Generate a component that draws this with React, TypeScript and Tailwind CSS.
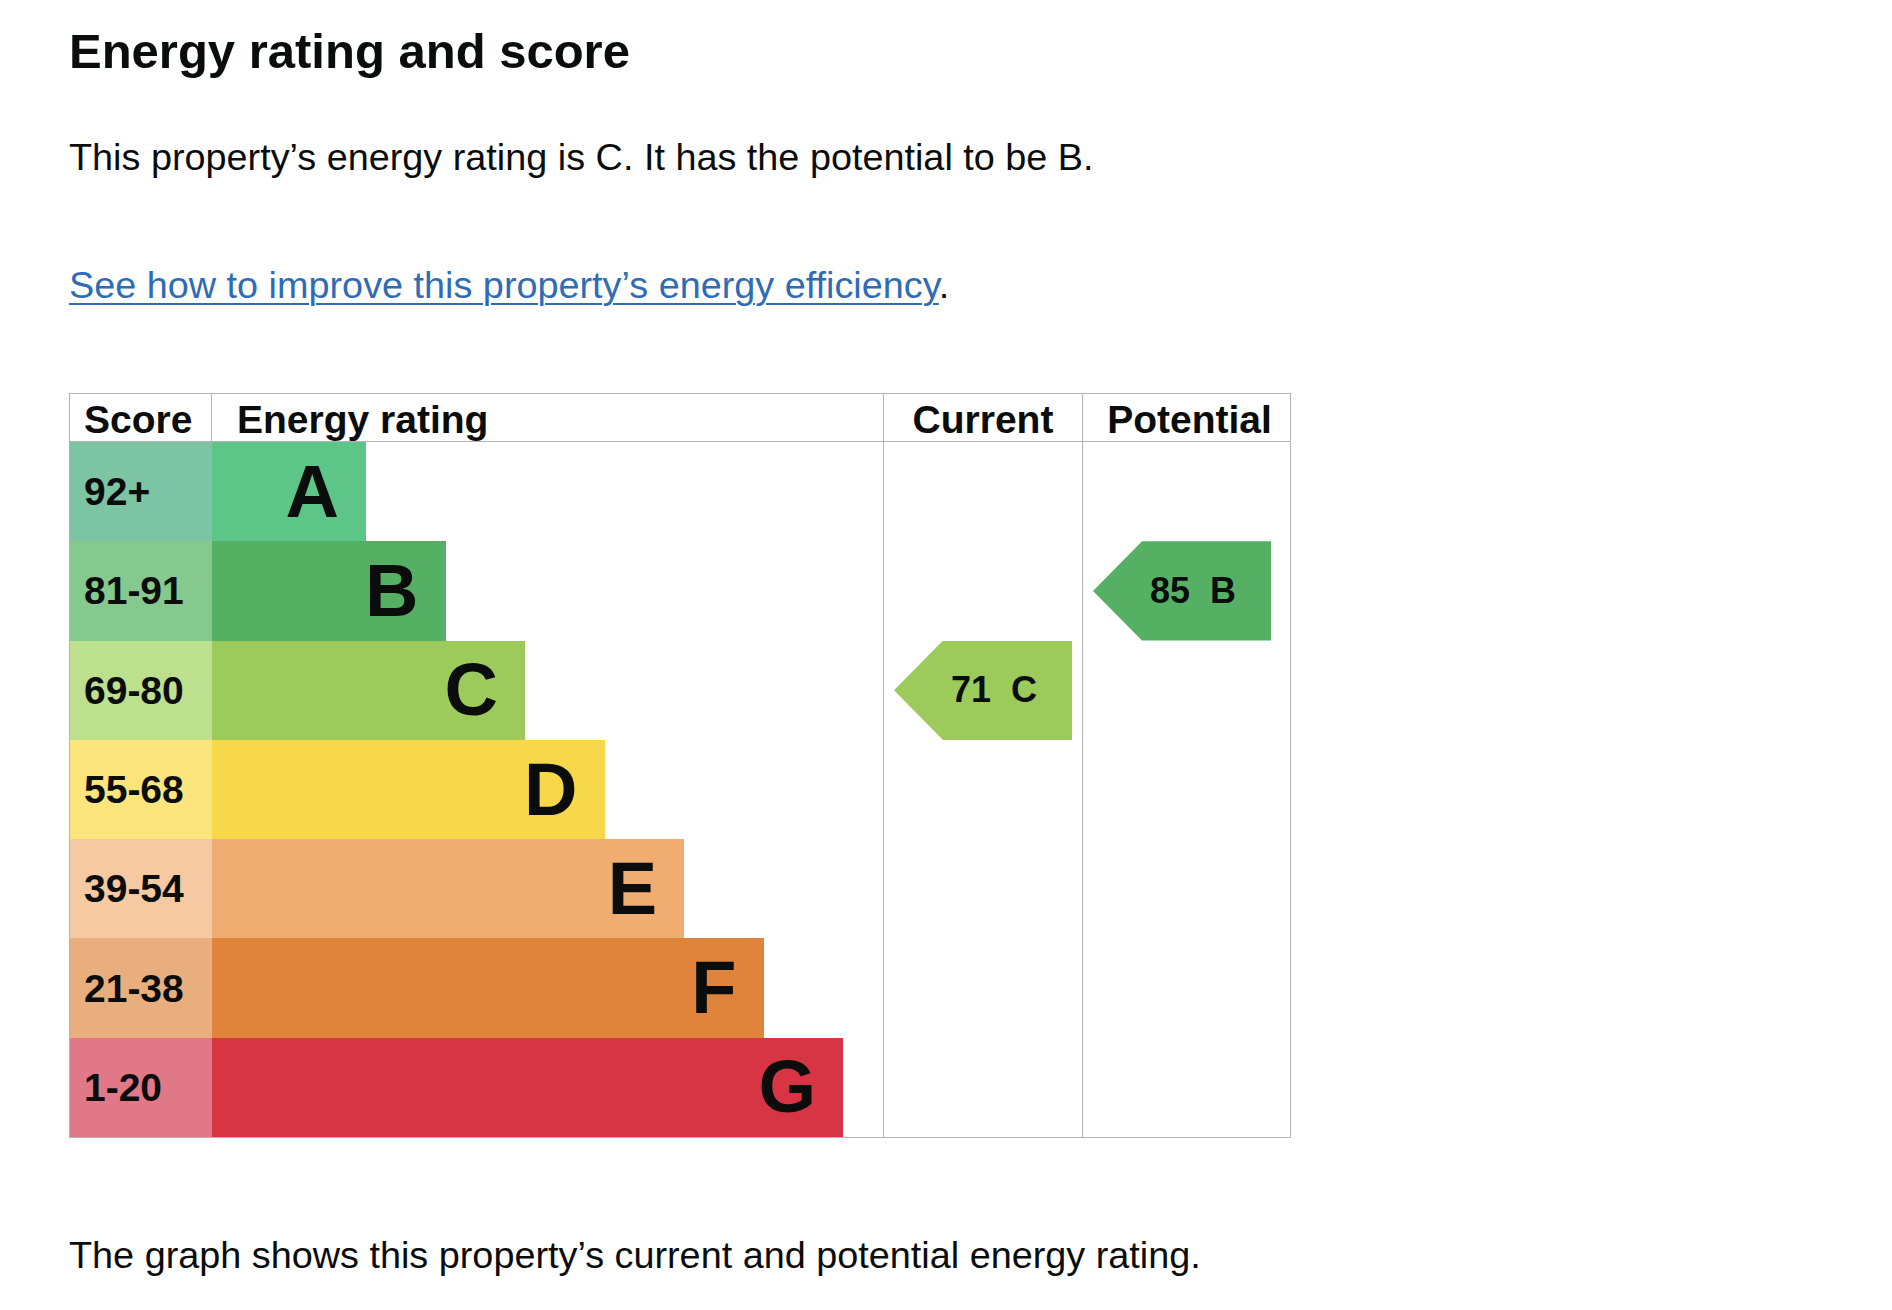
import React from "react";

const bands = [
  { score: "92+", letter: "A", scoreBg: "bg-[#7dc4a5]", barBg: "bg-[#5cc587]", width: "w-[154px]" },
  { score: "81-91", letter: "B", scoreBg: "bg-[#86c98f]", barBg: "bg-[#55b064]", width: "w-[233.5px]" },
  { score: "69-80", letter: "C", scoreBg: "bg-[#bde08f]", barBg: "bg-[#9ccb5b]", width: "w-[313px]" },
  { score: "55-68", letter: "D", scoreBg: "bg-[#fce57c]", barBg: "bg-[#f7d84b]", width: "w-[392.5px]" },
  { score: "39-54", letter: "E", scoreBg: "bg-[#f5c9a2]", barBg: "bg-[#f0ad72]", width: "w-[472px]" },
  { score: "21-38", letter: "F", scoreBg: "bg-[#e9ae7e]", barBg: "bg-[#e0843b]", width: "w-[551.5px]" },
  { score: "1-20", letter: "G", scoreBg: "bg-[#e17888]", barBg: "bg-[#d73444]", width: "w-[631px]" },
];

const current = { row: 2, score: 71, letter: "C", bg: "bg-[#9ccb5b]" };
const potential = { row: 1, score: 85, letter: "B", bg: "bg-[#55b064]" };

type Marker = { row: number; score: number; letter: string; bg: string };

const Arrow = ({ marker }: { marker: Marker }) => (
  <div
    className={`ml-[10px] flex h-full w-[178px] items-center pl-[57px] [clip-path:polygon(49px_0,100%_0,100%_100%,49px_100%,0_50%)] ${marker.bg}`}
  >
    <span className="whitespace-pre text-[36px] font-bold leading-none">
      {marker.score}  {marker.letter}
    </span>
  </div>
);

const RatingColumn = ({
  title,
  width,
  headerPad,
  marker,
}: {
  title: string;
  width: string;
  headerPad: string;
  marker: Marker;
}) => (
  <div className={`flex flex-col border-l border-[#b4b4b4] ${width}`}>
    <div className={`flex h-[48px] items-end justify-center border-b border-[#b4b4b4] pb-[2px] ${headerPad}`}>
      <span className="text-[39px] font-bold leading-[39px]">{title}</span>
    </div>
    {bands.map((band, i) => (
      <div key={band.letter} className="h-[99.3px]">
        {i === marker.row && <Arrow marker={marker} />}
      </div>
    ))}
  </div>
);

export default function App() {
  return (
    <div className="min-h-screen bg-white font-['Liberation_Sans',Arial,sans-serif] text-[#0b0c0c]">
      <div className="pl-[69px] pt-[21px]">
        <h2 className="text-[49px] font-bold leading-[60px]">Energy rating and score</h2>

        <p className="mt-[52px] text-[37.8px] leading-[49px]">
          This property’s energy rating is C. It has the potential to be B.
        </p>

        <p className="mt-[79px] text-[37.8px] leading-[49px]">
          <a
            href="#"
            className="text-[#2f6cb5] underline decoration-2 underline-offset-[5px]"
          >
            See how to improve this property’s energy efficiency
          </a>
          .
        </p>

        {/* Rating graph */}
        <div className="mt-[83px] flex w-[1222px] border border-[#b4b4b4]">
          <div className="flex w-[813px] flex-col">
            <div className="flex h-[48px] border-b border-[#b4b4b4]">
              <div className="flex w-[142px] items-end border-r border-[#b4b4b4] pb-[2px] pl-[14px]">
                <span className="text-[39px] font-bold leading-[39px]">Score</span>
              </div>
              <div className="flex flex-1 items-end pb-[2px] pl-[25px]">
                <span className="text-[39px] font-bold leading-[39px]">Energy rating</span>
              </div>
            </div>

            {bands.map((band) => (
              <div key={band.letter} className="flex h-[99.3px]">
                <div className={`flex w-[142px] items-center pl-[14px] ${band.scoreBg}`}>
                  <span className="text-[39px] font-bold leading-none">{band.score}</span>
                </div>
                <div className={`flex items-center justify-end pr-[27px] ${band.width} ${band.barBg}`}>
                  <span className="text-[74px] font-bold leading-none">{band.letter}</span>
                </div>
              </div>
            ))}
          </div>

          <RatingColumn title="Current" width="w-[199px]" headerPad="pl-0" marker={current} />
          <RatingColumn title="Potential" width="w-[208px]" headerPad="pl-[6px]" marker={potential} />
        </div>

        <p className="mt-[93px] text-[37.8px] leading-[49px]">
          The graph shows this property’s current and potential energy rating.
        </p>
      </div>
    </div>
  );
}
